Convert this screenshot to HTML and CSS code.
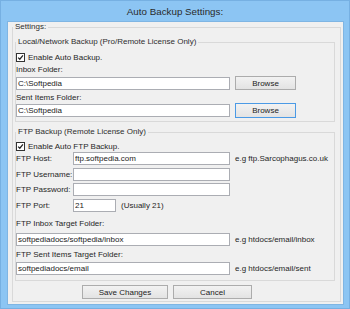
FILE: index.html
```html
<!DOCTYPE html>
<html>
<head>
<meta charset="utf-8">
<link rel="stylesheet" href="styles.css">
</head>
<body>
<div class="window">
  <div class="titlebar">Auto Backup Settings:</div>
  <div class="client">
    <fieldset class="group outer">
      <legend>Settings:</legend>

      <fieldset class="group local">
        <legend>Local/Network Backup (Pro/Remote License Only)</legend>
        <label class="check check-local"><span class="box"><svg viewBox="0 0 8 8" width="8" height="8"><path d="M1.3 4.1 L3.2 6 L6.8 1.6" fill="none" stroke="#222" stroke-width="1.4"/></svg></span>Enable Auto Backup.</label>
        <div class="caption cap-inbox">Inbox Folder:</div>
        <div class="pathrow row-inbox">
          <input class="txt wide" type="text" value="C:\Softpedia">
          <button class="btn browse">Browse</button>
        </div>
        <div class="caption cap-sent">Sent Items Folder:</div>
        <div class="pathrow row-sent">
          <input class="txt wide" type="text" value="C:\Softpedia">
          <button class="btn browse focused">Browse</button>
        </div>
      </fieldset>

      <fieldset class="group ftp">
        <legend>FTP Backup (Remote License Only)</legend>
        <label class="check check-ftp"><span class="box"><svg viewBox="0 0 8 8" width="8" height="8"><path d="M1.3 4.1 L3.2 6 L6.8 1.6" fill="none" stroke="#222" stroke-width="1.4"/></svg></span>Enable Auto FTP Backup.</label>
        <div class="formrow r-host">
          <span class="flabel">FTP Host:</span>
          <input class="txt mid" type="text" value="ftp.softpedia.com">
          <span class="hint">e.g ftp.Sarcophagus.co.uk</span>
        </div>
        <div class="formrow r-user">
          <span class="flabel">FTP Username:</span>
          <input class="txt mid" type="text" value="">
        </div>
        <div class="formrow r-pass">
          <span class="flabel">FTP Password:</span>
          <input class="txt mid" type="password" value="">
        </div>
        <div class="formrow r-port">
          <span class="flabel">FTP Port:</span>
          <input class="txt port" type="text" value="21">
          <span class="hint usually">(Usually 21)</span>
        </div>
        <div class="caption cap-ftpinbox">FTP Inbox Target Folder:</div>
        <div class="pathrow row-ftpinbox">
          <input class="txt wide" type="text" value="softpediadocs/softpedia/inbox">
          <span class="hint">e.g htdocs/email/inbox</span>
        </div>
        <div class="caption cap-ftpsent">FTP Sent Items Target Folder:</div>
        <div class="pathrow row-ftpsent">
          <input class="txt wide" type="text" value="softpediadocs/email">
          <span class="hint">e.g htdocs/email/sent</span>
        </div>
      </fieldset>

      <div class="actions">
        <button class="btn save">Save Changes</button>
        <button class="btn cancel">Cancel</button>
      </div>
    </fieldset>
  </div>
</div>
</body>
</html>
```

FILE: styles.css
```css
html, body {
  margin: 0;
  padding: 0;
}
body {
  width: 350px;
  height: 309px;
  overflow: hidden;
  background: #8cc5f3;
  font-family: "Liberation Sans", Arial, sans-serif;
  font-size: 8px;
  color: #262626;
}
.window {
  box-sizing: border-box;
  width: 350px;
  height: 309px;
  border: 1px solid #76b0e2;
  display: flex;
  flex-direction: column;
}
.titlebar {
  height: 21px;
  line-height: 22px;
  text-align: center;
  font-size: 9.8px;
  color: #2a2a2a;
}
.client {
  margin: 0 6px 6px 7px;
  flex: 1;
  background: #f0f0f0;
  box-shadow: 0 0 0 1px #7fb5e3;
  display: flex;
  flex-direction: column;
}
.group {
  border: 1px solid #d9d9d9;
  margin: 0;
  padding: 0;
  min-width: 0;
}
.group > legend {
  padding: 0 2px;
  margin: 0;
  line-height: 10px;
  height: 10px;
  color: #2e2e2e;
}
.outer {
  flex: 1;
  margin: 0 2px 2px 4px;
  display: block;
}
.local {
  margin: 5px 5px 0 2px;
  padding: 0 0 3px 0;
}
.ftp {
  margin: 5px 5px 0 2px;
  padding: 0 0 5px 0;
}
.check {
  display: flex;
  align-items: center;
  height: 10px;
  padding-left: 0;
  gap: 3px;
}
.check-local { margin-top: 5px; }
.check-ftp { margin-top: 4px; }
.box {
  box-sizing: border-box;
  width: 9px;
  height: 9px;
  border: 1px solid #333;
  background: #fff;
  display: flex;
  align-items: center;
  justify-content: center;
}
.box svg { display: block; width: 7px; height: 7px; }
.caption {
  height: 10px;
  line-height: 10px;
}
.cap-inbox { margin-top: 3px; }
.cap-sent { margin-top: 3px; }
.cap-ftpinbox { margin-top: 7px; }
.cap-ftpsent { margin-top: 4px; }
.pathrow, .formrow {
  display: flex;
  align-items: center;
}
.row-inbox { margin-top: 1px; height: 14px; }
.row-sent { margin-top: 0; height: 15px; }
.row-ftpinbox { margin-top: 4px; height: 13px; }
.row-ftpsent { margin-top: 2px; height: 13px; }
.formrow { height: 13px; }
.r-host { margin-top: 1px; }
.r-user { margin-top: 3px; }
.r-pass { margin-top: 2px; }
.r-port { margin-top: 3px; }
.flabel {
  width: 57px;
  flex: none;
}
.txt {
  box-sizing: border-box;
  height: 13px;
  border: 1px solid #abadb3;
  background: #fff;
  font: inherit;
  color: #222;
  padding: 0 1px;
  margin: 0;
  outline: none;
}
.wide { width: 214px; }
.mid { width: 157px; }
.port { width: 43px; }
.hint {
  margin-left: 5px;
  white-space: nowrap;
}
.usually { margin-left: 5px; }
.btn {
  box-sizing: border-box;
  font: inherit;
  color: #222;
  border: 1px solid #acacac;
  background: linear-gradient(#f2f2f2, #e3e3e3);
  padding: 0;
  margin: 0;
  border-radius: 0;
}
.browse {
  width: 61px;
  height: 14px;
  margin-left: 5px;
}
.focused {
  border-color: #4b9ae5;
  height: 15px;
}
.actions {
  display: flex;
  gap: 5px;
  margin: 4px 0 2px 69px;
}
.save { width: 86px; height: 14px; }
.cancel { width: 79px; height: 14px; }
```
